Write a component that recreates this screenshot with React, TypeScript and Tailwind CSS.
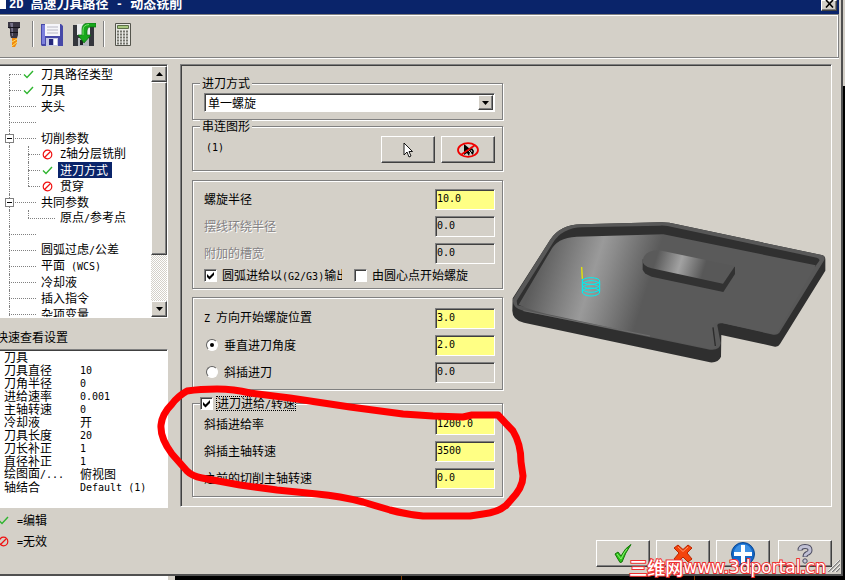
import React, { useState } from 'react';
import clsx from 'clsx';

type Status = 'edit' | 'off';

type TreeItem = {
  label: string;
  level: 0 | 1;
  status?: Status;
  expandable?: boolean;
  first?: boolean;
  last?: boolean;
};

const raised =
  'border border-t-white border-l-white border-r-[#404040] border-b-[#404040] bg-[#d4d0c8] shadow-[inset_-1px_-1px_0_#808080]';
const sunken =
  'border border-t-[#808080] border-l-[#808080] border-r-white border-b-white shadow-[inset_1px_1px_0_#404040]';
const etched = 'border border-[#808080] shadow-[1px_1px_0_#fff,inset_1px_1px_0_#fff]';

const treeItems: TreeItem[] = [
  { label: '刀具路径类型', level: 0, status: 'edit', first: true },
  { label: '刀具', level: 0, status: 'edit' },
  { label: '夹头', level: 0 },
  { label: '', level: 0 },
  { label: '切削参数', level: 0, expandable: true },
  { label: 'Z轴分层铣削', level: 1, status: 'off' },
  { label: '进刀方式', level: 1, status: 'edit' },
  { label: '贯穿', level: 1, status: 'off', last: true },
  { label: '共同参数', level: 0, expandable: true },
  { label: '原点/参考点', level: 1, last: true },
  { label: '', level: 0 },
  { label: '圆弧过虑/公差', level: 0 },
  { label: '平面 (WCS)', level: 0 },
  { label: '冷却液', level: 0 },
  { label: '插入指令', level: 0 },
  { label: '杂项变量', level: 0 },
];

const quickView = [
  ['刀具', ''],
  ['刀具直径', '10'],
  ['刀角半径', '0'],
  ['进给速率', '0.001'],
  ['主轴转速', '0'],
  ['冷却液', '开'],
  ['刀具长度', '20'],
  ['刀长补正', '1'],
  ['直径补正', '1'],
  ['绘图面/...', '俯视图'],
  ['轴结合', 'Default (1)'],
];

// Latin runs take the narrow fixed-width face, half as wide as a Chinese character
const T: React.FC<{ children: string }> = ({ children }) => (
  <>
    {children.split(/([\x20-\x7e]+)/).map((part, i) =>
      i % 2 ? (
        <span key={i} className="whitespace-pre font-['DejaVu_Sans_Mono',monospace] text-[10px]">
          {part}
        </span>
      ) : (
        part
      )
    )}
  </>
);

const StatusIcon: React.FC<{ status: Status }> = ({ status }) =>
  status === 'edit' ? (
    <svg width="11" height="11" viewBox="0 0 11 11" fill="none" stroke="#2fb52f" strokeWidth="1.4">
      <path d="M1 5.5 L4 8.5 L10 2" />
    </svg>
  ) : (
    <svg width="11" height="11" viewBox="0 0 11 11" fill="none" stroke="#f01010" strokeWidth="1.2">
      <circle cx="5.5" cy="5.5" r="4.3" />
      <path d="M2.5 8.5 L8.5 2.5" />
    </svg>
  );

const Arrow: React.FC<{ up?: boolean }> = ({ up }) => (
  <svg width="7" height="4" viewBox="0 0 7 4">
    <path d={up ? 'M0 4 L3.5 0 L7 4 Z' : 'M0 0 L3.5 4 L7 0 Z'} />
  </svg>
);

const Dash: React.FC<{ className: string }> = ({ className }) => (
  <span className={clsx('border-t border-dotted border-[#808080]', className)} />
);

const TreeRow: React.FC<{ item: TreeItem; selected: boolean; onSelect: () => void }> = ({ item, selected, onSelect }) => (
  <li className="flex h-4 items-center pl-[9px]">
    {item.level === 1 && <span className="h-4 w-[19px] border-l border-dotted border-[#808080]" />}
    <span className="relative flex h-4 w-[30px] items-center">
      <span
        className={clsx(
          'absolute left-0 border-l border-dotted border-[#808080]',
          item.first ? 'top-2 h-2' : item.last ? 'top-0 h-2' : 'top-0 h-4'
        )}
      />
      {item.expandable && (
        <span className="absolute -left-1 flex h-[9px] w-[9px] items-center justify-center border border-[#808080] bg-white">
          <span className="h-px w-[5px] bg-black" />
        </span>
      )}
      <Dash className={item.status ? 'mr-0.5 w-3' : 'w-[27px]'} />
      {item.status && <StatusIcon status={item.status} />}
    </span>
    {item.label && (
      <button
        onClick={onSelect}
        className={clsx('h-4 px-0.5 pb-px whitespace-nowrap', selected && 'bg-[#0a246a] pr-1 text-white')}
      >
        <T>{item.label}</T>
      </button>
    )}
  </li>
);

const Check: React.FC<{ id: string; defaultChecked?: boolean }> = ({ id, defaultChecked }) => (
  <span className="relative flex">
    <input
      id={id}
      type="checkbox"
      defaultChecked={defaultChecked}
      className={clsx('peer h-[13px] w-[13px] appearance-none bg-white', sunken)}
    />
    <svg className="pointer-events-none absolute top-0 left-0 hidden peer-checked:block" width="13" height="13" viewBox="0 0 13 13">
      <path d="M3 5 L5.5 7.5 L10 3 V6 L5.5 10.5 L3 8 Z" />
    </svg>
  </span>
);

const Field: React.FC<{ id: string; label: string; value: string; disabled?: boolean; radio?: boolean; checked?: boolean }> = ({
  id,
  label,
  value,
  disabled,
  radio,
  checked,
}) => {
  const off = disabled || (radio && !checked);
  return (
    <div className="flex h-[21px] items-center justify-between">
      <span className="flex items-center gap-1.5 pb-0.5">
        {radio && (
          <span className="relative ml-0.5 flex">
            <input
              id={`${id}-mode`}
              type="radio"
              name="entry-angle"
              defaultChecked={checked}
              className="peer h-3 w-3 appearance-none rounded-full border border-t-[#606060] border-l-[#606060] border-r-white border-b-white bg-white"
            />
            <span className="pointer-events-none absolute top-1 left-1 hidden h-1 w-1 rounded-full bg-black peer-checked:block" />
          </span>
        )}
        <label
          htmlFor={radio ? `${id}-mode` : id}
          className={clsx(disabled && 'text-[#848284] [text-shadow:1px_1px_0_#fff]')}
        >
          <T>{label}</T>
        </label>
      </span>
      <input
        id={id}
        aria-label={label}
        defaultValue={value}
        disabled={off}
        className={clsx(
          "h-[21px] w-[60px] pb-0.5 pl-px font-['DejaVu_Sans_Mono',monospace] text-[10px] text-black",
          sunken,
          off ? 'bg-[#d4d0c8]' : 'bg-[#ffff84]'
        )}
      />
    </div>
  );
};

const Toolbar: React.FC = () => (
  <div className="mr-0.5 flex h-[44px] items-center gap-[7px] border-t border-r border-b border-[#808080] pb-1 pl-[3px] shadow-[0_1px_0_#fff,inset_-1px_1px_0_#fff]">
    <button aria-label="刀具" className="flex w-[22px] justify-center">
      <svg width="14" height="25" viewBox="0 0 14 25">
        <path d="M1 0 H13 V5 L11 7 V13 L10 16 H4 L3 13 V7 L1 5 Z" fill="#3a3644" />
        <path d="M3 1 H6 V14 H5 L4 6 Z" fill="#77728a" />
        <path d="M1 5.5 H13 M3 10.5 H11" stroke="#15131c" />
        <path d="M5 16 H10 V21 L8 25 H5 Z" fill="#f08a10" />
        <path d="M5 20 L10 17 M5 24 L10 20" stroke="#ffe060" />
      </svg>
    </button>
    <span className="h-[26px] w-0.5 border-l border-[#808080] bg-white" />
    <button aria-label="保存" className="flex">
      <svg width="22" height="23" viewBox="0 0 22 23">
        <path d="M0 1 H20 L22 3 V23 H1 L0 22 Z" fill="#4648a8" />
        <path d="M1 2 H4 V21 H1 Z" fill="#7c80dc" />
        <path d="M4 1 H19 V13 H4 Z" fill="#f6f6fa" />
        <path d="M6 4 H17 M6 7 H17 M6 10 H17" stroke="#b8b8c4" />
        <path d="M5 15 H17 V23 H5 Z" fill="#c4c8e4" />
        <path d="M8 16 H12 V22 H8 Z" fill="#26287c" />
        <path d="M13 16 H16 V22 H13 Z" fill="#fff" />
      </svg>
    </button>
    <button aria-label="另存" className="ml-[3px] flex">
      <svg width="23" height="23" viewBox="0 0 23 23">
        <path d="M0 2 H19 L21 4 V23 H0 Z" fill="#34363c" />
        <path d="M4 1 H17 V12 H4 Z" fill="#eceef0" />
        <path d="M5 15 H16 V23 H5 Z" fill="#b4b8bc" />
        <path d="M7 17 H10 V22 H7 Z" fill="#202226" />
        <path d="M23 0 V4 H17 Q14 4 14 8 V12 H18 L11 20 L5 12 H9 V6 Q9 0 16 0 Z" fill="#18a81c" stroke="#0a6c10" strokeWidth="0.7" />
        <path d="M10 12 V7 Q10 2 16 1.5" fill="none" stroke="#76e46c" />
      </svg>
    </button>
    <span className="h-[26px] w-0.5 border-l border-[#808080] bg-white" />
    <button aria-label="计算器" className="ml-[3px] flex">
      <svg width="16" height="23" viewBox="0 0 16 23">
        <path d="M0.5 0.5 H15.5 V22.5 H0.5 Z" fill="#e8e8e4" stroke="#54544c" />
        <path d="M2.5 2.5 H13.5 V5.5 H2.5 Z" fill="#a8c880" stroke="#5c7048" />
        <path d="M2 8.5 H14 M2 11.5 H14 M2 14.5 H14 M2 17.5 H14 M2 20.5 H14" stroke="#74746c" strokeWidth="2" strokeDasharray="2 1" />
      </svg>
    </button>
  </div>
);

const PartDrawing: React.FC = () => (
  <svg className="w-full max-w-[315px]" viewBox="36 60 945 435">
    <defs>
      <linearGradient id="floor" gradientUnits="userSpaceOnUse" x1="110" y1="200" x2="430" y2="300">
        <stop offset="0" stopColor="#5c5c5c" />
        <stop offset="0.5" stopColor="#9a9a9a" />
        <stop offset="0.62" stopColor="#8c8c8c" />
        <stop offset="1" stopColor="#5a5a5a" />
      </linearGradient>
      <linearGradient id="island" gradientUnits="userSpaceOnUse" x1="470" y1="170" x2="610" y2="215">
        <stop offset="0" stopColor="#5a5a5a" />
        <stop offset="0.5" stopColor="#a2a2a2" />
        <stop offset="1" stopColor="#585858" />
      </linearGradient>
    </defs>
    <path
      d="M38 295 L150 120 Q180 74 245 73 L480 67 Q505 66 530 73 L965 165 Q977 168 976 180 V212 L840 432 Q835 441 825 440 L664 405 L663 470 Q655 489 630 487 L72 368 Q37 360 37 332 Z"
      fill="#2f2f2f"
    />
    <path
      d="M39 297 L150 120 Q180 74 245 73 L480 67 Q505 66 530 73 L965 165 Q977 168 973 180 L838 398 Q832 406 820 404 L668 370 Q653 368 652 376 L662 430 Q660 452 630 449 L72 333 Q35 325 39 297 Z"
      fill="#585858"
    />
    <path
      d="M50 302 L158 130 Q186 83 248 82 L480 77 Q500 76 520 82 L950 173 Q962 176 957 184 L945 200 L500 112 L240 118 L75 320 L52 316 Z"
      fill="#303030"
    />
    <path
      d="M56 314 L150 155 Q170 112 230 110 L490 103 L947 196 L832 396 Q828 403 816 401 L668 369 Q638 364 640 380 L648 436 Q648 448 630 446 L180 350 Q100 335 56 314 Z"
      fill="url(#floor)"
    />
    <path d="M639 382 L646 438" stroke="#2c2c2c" strokeWidth="4" />
    <path d="M70 332 L450 408" stroke="#777" strokeWidth="2" />
    <path d="M428 178 V208 Q430 222 455 230 L670 276 L705 222 V200 Z" fill="#323232" />
    <path d="M428 182 Q432 150 478 151 L705 198 L669 251 L455 205 Q427 198 428 182 Z" fill="url(#island)" />
    <g fill="none" stroke="#00f0f0" strokeWidth="3">
      <ellipse cx="273" cy="243" rx="26" ry="10" />
      <ellipse cx="273" cy="254" rx="26" ry="12" />
      <ellipse cx="273" cy="265" rx="26" ry="12" />
      <ellipse cx="273" cy="276" rx="26" ry="12" />
      <path d="M247 235 V278 M299 243 V275" />
    </g>
    <path d="M245 201 L247 236" stroke="#e8e800" strokeWidth="4" />
  </svg>
);

const ActionButton: React.FC<{ label: string; children: React.ReactNode }> = ({ label, children }) => (
  <button aria-label={label} className={clsx('flex h-[27px] w-[54px] items-center justify-center', raised)}>
    {children}
  </button>
);

const App: React.FC = () => {
  const [selected, setSelected] = useState('进刀方式');

  return (
    <div className="relative h-screen overflow-hidden bg-black font-['Noto_Sans_CJK_SC',sans-serif] text-xs leading-none text-black">
      <div className="mr-0.5 border-r-2 border-b-2 border-[#505050] bg-[#d4d0c8] pb-[7px]">
        <header className="mr-0.5 flex h-[14px] items-start bg-[#0a246a] text-[13px] font-bold text-white">
          <span className="mr-[3px] h-[9px] w-1.5 bg-white" />
          <h1 className="-mt-1 flex-1">
            <span className="font-['Liberation_Mono',monospace] text-xs">2D </span>高速刀具路径
            <span className="font-['Liberation_Mono',monospace] text-xs whitespace-pre"> - </span>动态铣削
          </h1>
          <button aria-label="关闭" className={clsx('mr-0.5 flex h-[11px] w-4 items-end justify-center pb-0.5', raised)}>
            <svg width="9" height="8" viewBox="0 0 9 8" stroke="#000" strokeWidth="1.6">
              <path d="M1 0 L8 7.5 M8 0 L1 7.5" />
            </svg>
          </button>
        </header>

        <Toolbar />

        <div className="flex gap-3 pt-1.5 pr-[9px]">
          <aside className="w-[168px] shrink-0">
            <div className={clsx('-ml-0.5 flex h-[254px] bg-white pt-px pl-0.5', sunken)}>
              <ul className="-ml-px flex-1 overflow-hidden">
                {treeItems.map((item, i) => (
                  <TreeRow
                    key={i}
                    item={item}
                    selected={item.label !== '' && item.label === selected}
                    onSelect={() => setSelected(item.label)}
                  />
                ))}
              </ul>
              <div className="flex w-4 flex-col bg-[repeating-conic-gradient(#d4d0c8_0_25%,#fff_0_50%)] bg-[length:2px_2px]">
                <button aria-label="向上" className={clsx('flex h-4 items-center justify-center', raised)}>
                  <Arrow up />
                </button>
                <div className={clsx('h-[173px]', raised)} />
                <div className="flex-1" />
                <button aria-label="向下" className={clsx('flex h-4 items-center justify-center', raised)}>
                  <Arrow />
                </button>
              </div>
            </div>

            <h2 className="-ml-1 flex h-[31px] items-center pt-1.5">快速查看设置</h2>

            <div className={clsx('-ml-0.5 h-[159px] bg-white pl-0.5', sunken)}>
              <table>
                <tbody>
                  {quickView.map(([name, value]) => (
                    <tr key={name} className="h-[13px]">
                      <th scope="row" className="w-[78px] p-0 pl-[3px] text-left font-normal">
                        <T>{name}</T>
                      </th>
                      <td className="p-0 pl-px">
                        <T>{value}</T>
                      </td>
                    </tr>
                  ))}
                </tbody>
              </table>
            </div>

            <ul className="pt-0.5">
              <li className="flex h-[21px] items-center gap-2">
                <span className="-ml-0.5">
                  <StatusIcon status="edit" />
                </span>
                <span>
                  <T>=编辑</T>
                </span>
              </li>
              <li className="flex h-[21px] items-center gap-2">
                <span className="-ml-0.5">
                  <StatusIcon status="off" />
                </span>
                <span>
                  <T>=无效</T>
                </span>
              </li>
            </ul>
          </aside>

          <div className="min-w-0 flex-1">
            <main className={clsx('flex pb-[9px]', sunken)}>
              <form className="flex w-[322px] shrink-0 flex-col pt-3 pl-[11px]">
                <fieldset className={clsx('pr-[7px] pb-[7px] pl-[11px]', etched)}>
                  <legend className="-ml-1 h-3 bg-[#d4d0c8] px-0.5">
                    <label htmlFor="entry">进刀方式</label>
                  </legend>
                  <div className="relative pt-1">
                    <select id="entry" className={clsx('h-[19px] w-full appearance-none bg-white pl-[3px]', sunken)}>
                      <option>单一螺旋</option>
                    </select>
                    <span
                      className={clsx(
                        'pointer-events-none absolute top-1.5 right-0.5 flex h-[15px] w-[15px] items-center justify-center',
                        raised
                      )}
                    >
                      <Arrow />
                    </span>
                  </div>
                </fieldset>

                <fieldset className={clsx('pr-[7px] pb-[7px] pl-[11px]', etched)}>
                  <legend className="-ml-1 h-3 bg-[#d4d0c8] px-0.5">串连图形</legend>
                  <div className="flex gap-1.5 pt-1">
                    <span className="flex-1 pt-1 pl-0.5">
                      <T>(1)</T>
                    </span>
                    <ActionButton label="选择">
                      <svg width="10" height="16" viewBox="0 0 10 16">
                        <path d="M1 1 V13 L4 10 L6 15 L8 14 L6 9.5 H9.5 Z" fill="#fff" stroke="#000" strokeWidth="0.9" />
                      </svg>
                    </ActionButton>
                    <ActionButton label="取消选择">
                      <svg width="22" height="16" viewBox="0 0 22 16">
                        <path d="M7 2 V13 L10 11 L12 14 L13 10 L16 13 L17 9 L15 6 L13 7 Z" />
                        <path d="M11 8 L14 11 M14 8 L15 10" stroke="#d4d0c8" />
                        <ellipse cx="11" cy="8" rx="10" ry="6.8" fill="none" stroke="#f00000" strokeWidth="1.8" />
                        <path d="M4.5 12.5 L17.5 3.5" stroke="#f00000" strokeWidth="1.8" />
                      </svg>
                    </ActionButton>
                  </div>
                </fieldset>

                <div className={clsx('mt-[9px] flex flex-col gap-1.5 pt-2 pr-[7px] pb-0.5 pl-[11px]', etched)}>
                  <Field id="radius" label="螺旋半径" value="10.0" />
                  <Field id="loop" label="摆线环绕半径" value="0.0" disabled />
                  <Field id="slot" label="附加的槽宽" value="0.0" disabled />
                  <div className="-mt-1.5 flex h-[22px] items-center">
                    <Check id="arc" defaultChecked />
                    <label htmlFor="arc" className="mr-3 ml-[5px] w-[120px] overflow-hidden py-px whitespace-nowrap">
                      <T>圆弧进给以(G2/G3)输出</T>
                    </label>
                    <Check id="center" />
                    <label htmlFor="center" className="ml-[5px] whitespace-nowrap">
                      由圆心点开始螺旋
                    </label>
                  </div>
                </div>

                <div className={clsx('mt-2 flex flex-col gap-1.5 pt-2.5 pr-[7px] pb-1.5 pl-[11px]', etched)}>
                  <Field id="z-start" label="Z 方向开始螺旋位置" value="3.0" />
                  <Field id="plunge" label="垂直进刀角度" value="2.0" radio checked />
                  <Field id="ramp" label="斜插进刀" value="0.0" radio />
                </div>

                <fieldset className={clsx('mt-[7px] pr-[7px] pb-[7px] pl-[11px]', etched)}>
                  <legend className="-ml-1 flex h-[13px] items-center gap-[3px] bg-[#d4d0c8]">
                    <Check id="feeds" defaultChecked />
                    <label htmlFor="feeds" className="border border-dotted border-black">
                      <T>进刀进给/转速</T>
                    </label>
                  </legend>
                  <div className="flex flex-col gap-1.5 pt-1">
                    <Field id="ramp-feed" label="斜插进给率" value="1200.0" />
                    <Field id="ramp-speed" label="斜插主轴转速" value="3500" />
                    <Field id="prev-speed" label="之前的切削主轴转速" value="0.0" />
                  </div>
                </fieldset>
              </form>
              <div className="min-w-0 flex-1 pt-[155px] pr-1 pl-[9px]">
                <PartDrawing />
              </div>
            </main>

            <div className="mt-[33px] flex justify-end gap-1.5">
              <ActionButton label="确定">
                <svg width="18" height="19" viewBox="0 0 18 19">
                  <path d="M1 10 L4 8 L7 12 Q11 4 17 0.5 Q11 9 8 18 L6 18.5 Z" fill="#2fc41c" stroke="#147408" />
                  <path d="M3 10 L7 15 Q10 8 13 5" fill="none" stroke="#8cf070" />
                </svg>
              </ActionButton>
              <ActionButton label="取消">
                <svg width="20" height="19" viewBox="0 0 20 19">
                  <path
                    d="M5 1 L10 5.5 L15 1 L19 4 L14 9 L19 15 L15 18 L10 13 L5 18 L1 15 L6 9 L1 4 Z"
                    fill="#f4440c"
                    stroke="#b82400"
                  />
                  <path d="M5 3 L10 7.5 L15 3" fill="none" stroke="#ff9468" />
                </svg>
              </ActionButton>
              <ActionButton label="应用">
                <svg width="24" height="24" viewBox="0 0 24 24">
                  <circle cx="12" cy="12" r="11.5" fill="#1468c8" stroke="#0c4890" />
                  <path d="M3 11 A9 9 0 0 1 21 11 Z" fill="#3c90e4" />
                  <path d="M12 3 V21 M3 12 H21" stroke="#fff" strokeWidth="4" />
                </svg>
              </ActionButton>
              <span className="ml-0.5">
                <ActionButton label="帮助">
                  <svg width="16" height="20" viewBox="0 0 16 20" fill="none" strokeLinejoin="round">
                    <path d="M3 6.5 Q3 2.5 8 2.5 Q13 2.5 13 6 Q13 8.5 10 9.5 Q8 10.5 8 13" stroke="#4c4c60" strokeWidth="5" />
                    <path d="M3 6 Q3 2.5 8 2.5 Q13 2.5 13 6 Q13 8.5 10 9.5 Q8 10.5 8 12.5" stroke="#c0c0d4" strokeWidth="3" />
                    <circle cx="8" cy="17" r="2.2" fill="#c8c8d8" stroke="#4c4c60" />
                  </svg>
                </ActionButton>
              </span>
            </div>
          </div>
        </div>
      </div>

      {/* desktop behind the dialog */}
      <div className="flex h-1">
        <span className="w-[168px] bg-white" />
        <span className="w-[7px] bg-[#d4d0c8]" />
        <span className="ml-[226px] w-px bg-[#803c00]" />
        <span className="ml-[292px] w-px bg-[#803c00]" />
      </div>
      <div className="absolute top-0 right-0 h-[86px] w-0.5 bg-[#d4d0c8]" />

      {/* resize grip */}
      <svg className="absolute right-[5px] bottom-2 h-3 w-3" viewBox="0 0 12 12" fill="none">
        <path d="M0 12 L12 0 M4 12 L12 4 M8 12 L12 8" stroke="#808080" strokeWidth="1.5" />
        <path d="M-1 12 L12 -1 M3 12 L12 3 M7 12 L12 7" stroke="#fff" strokeWidth="0.8" />
      </svg>

      {/* hand-drawn marker */}
      <svg className="pointer-events-none absolute top-[380px] left-[150px] h-[150px] w-[385px]" viewBox="0 0 385 150">
        <path
          d="M37 11 Q50 9 67 9 Q84 9 100 13 L140 18 L200 27 L253 34 L283 36 L313 37 L322 35 L348 35 L363 51 Q371 64 371 82 L373 96 Q373 108 360 121 Q352 132 333 134 L320 136 H273 Q255 134 240 130 L213 122 Q190 116 167 114 L127 110 Q105 107 90 105 L52 98 Q42 96 37 91 L22 74 Q10 58 11 45 Q12 34 22 24 Q28 16 37 11 Z"
          fill="none"
          stroke="#ff0000"
          strokeWidth="7"
          strokeLinejoin="round"
        />
      </svg>

      <p className="pointer-events-none absolute right-[19px] bottom-1 flex items-center text-white [-webkit-text-stroke:2px_#f03030] [paint-order:stroke_fill]">
        <span className="text-[18px] font-medium">三维网</span>
        <span className="font-['DejaVu_Sans',sans-serif] text-[17px]">www.3dportal.cn</span>
      </p>
    </div>
  );
};

export default App;
